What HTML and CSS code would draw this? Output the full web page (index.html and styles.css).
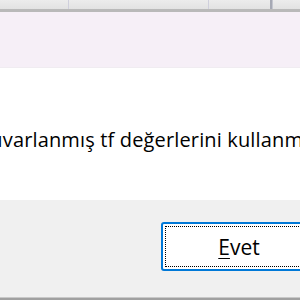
FILE: index.html
```html
<!DOCTYPE html>
<html lang="tr">
<head>
<meta charset="utf-8">
<link rel="stylesheet" href="styles.css">
</head>
<body>
<div class="window">
  <div class="header">
    <div class="col c1"></div>
    <div class="col c2"></div>
    <div class="col c3"></div>
    <div class="col c4"></div>
  </div>
  <div class="banner"></div>
  <div class="content">
    <p class="message">Yuvarlanmış tf değerlerini kullanmak istiyor musunuz?</p>
  </div>
  <div class="footer">
    <button class="btn"><span class="focus"><span class="label"><u>E</u>vet</span></span></button>
  </div>
  <div class="bottom"></div>
</div>
</body>
</html>
```
FILE: styles.css
```css
html, body {
  margin: 0;
  padding: 0;
  width: 300px;
  height: 300px;
  overflow: hidden;
  background: #ffffff;
}
.window {
  display: flex;
  flex-direction: column;
  width: 300px;
  height: 300px;
  font-family: "Open Sans", "Noto Sans", sans-serif;
  color: #000;
}
.header {
  height: 9px;
  display: flex;
  background: linear-gradient(#ececec, #e2e2e2);
  border-bottom: 3px solid #b9b9b9;
}
.col { height: 100%; }
.c1 { width: 68px; border-right: 1px solid #cfcfdc; }
.c2 { width: 139px; border-right: 1px solid #cfcfdc; }
.c3 { width: 61px; border-right: 2px solid #a6a9b4; }
.c4 { flex: 1; border-left: 1px solid #c4c6cf; }
.banner {
  height: 55px;
  background: #f6eff7;
  border-bottom: 1px solid #f0ecf1;
}
.content {
  height: 132px;
  background: #ffffff;
  display: flex;
  align-items: flex-start;
}
.message {
  margin: 58px 0 0 -21px;
  white-space: nowrap;
  font-size: 20px;
  line-height: 28px;
  letter-spacing: 0.15px;
}
.footer {
  flex: 1;
  background: #f0f0f0;
  display: flex;
  align-items: flex-start;
  padding: 22px 0 0 161px;
}
.btn {
  flex: none;
  width: 158px;
  height: 49px;
  border: 2px solid #0078d7;
  border-radius: 3px;
  background: #fff;
  font-family: inherit;
  display: flex;
  padding: 2px;
}
.focus {
  flex: 1;
  border: 1px dotted #000;
  display: flex;
  align-items: center;
  justify-content: center;
}
.label {
  font-size: 21px;
  color: #000;
  margin-left: -2px;
}
.label u {
  text-decoration-thickness: 1px;
  text-underline-offset: 3px;
}
.bottom {
  height: 2px;
  background: #a0a0a0;
  border-top: 1px solid #c8c8c8;
}
```
